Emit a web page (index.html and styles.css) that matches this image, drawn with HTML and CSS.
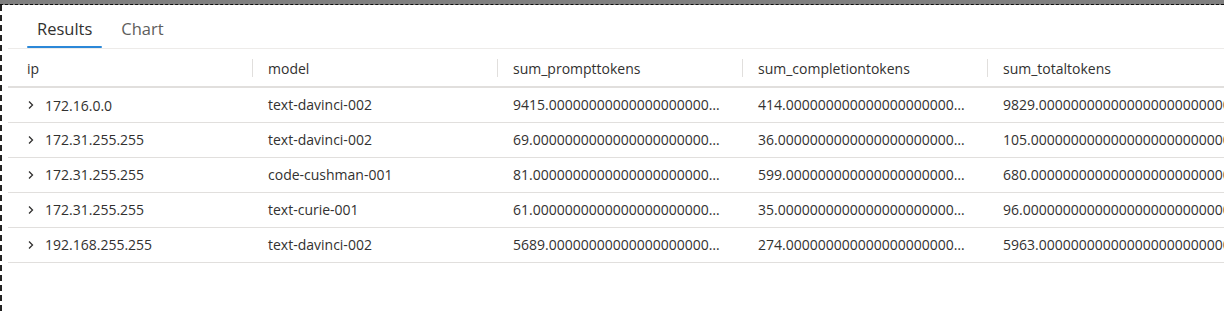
FILE: index.html
```html
<!DOCTYPE html>
<html lang="en">
  <head>
    <meta charset="UTF-8" />
    <title>Query results</title>
    <link rel="stylesheet" href="styles.css">
  </head>
  <body>
    <div class="topbar"></div>
    <div class="frame">
      <div class="tabs">
        <div class="tab active">Results</div>
        <div class="tab">Chart</div>
      </div>

      <table class="results">
        <colgroup>
          <col class="col-ip" />
          <col class="col" />
          <col class="col" />
          <col class="col" />
          <col class="col-last" />
        </colgroup>
        <thead>
          <tr>
            <th class="first">ip</th>
            <th class="sep">model</th>
            <th class="sep">sum_prompttokens</th>
            <th class="sep">sum_completiontokens</th>
            <th class="sep">sum_totaltokens</th>
          </tr>
        </thead>
        <tbody id="rows"></tbody>
      </table>
    </div>

    <script>
      const rows = [
        ["172.16.0.0", "text-davinci-002", "9415", "414", "9829"],
        ["172.31.255.255", "text-davinci-002", "69", "36", "105"],
        ["172.31.255.255", "code-cushman-001", "81", "599", "680"],
        ["172.31.255.255", "text-curie-001", "61", "35", "96"],
        ["192.168.255.255", "text-davinci-002", "5689", "274", "5963"],
      ];

      const zeros = ".0000000000000000000000000000000000";
      const chevron = `<svg class="chevron" width="8" height="10" viewBox="0 0 8 10"><path d="M2 1.5 L5.5 5 L2 8.5" fill="none" stroke="#323130" stroke-width="1.3"/></svg>`;

      document.getElementById("rows").innerHTML = rows
        .map(
          (r) => `
          <tr>
            <td class="first"><span class="ip">${chevron}${r[0]}</span></td>
            <td>${r[1]}</td>
            <td>${r[2]}${zeros}</td>
            <td>${r[3]}${zeros}</td>
            <td>${r[4]}${zeros}</td>
          </tr>`
        )
        .join("");
    </script>
  </body>
</html>
```

FILE: styles.css
```css
:root {
  --text: #323130;
  --muted: #605e5c;
  --line: #edebe9;
  --line-strong: #e1dfdd;
  --accent: #2b88d8;
}

* {
  margin: 0;
  padding: 0;
  box-sizing: border-box;
}

html,
body {
  width: 1224px;
  height: 311px;
  overflow: hidden;
}

body {
  background: white;
  color: var(--text);
  font-family: "Open Sans", "Noto Sans", sans-serif;
  font-size: 14px;
}

.topbar {
  height: 5px;
  background: #7f7f7f;
  border-bottom: 1px dashed #111;
}

.frame {
  height: 306px;
  border-left: 2px dashed #222;
  padding-left: 6px;
  overflow: hidden;
}

.tabs {
  display: flex;
  gap: 9px;
  padding: 9px 0 0 19px;
  border-bottom: 1px solid var(--line);
  height: 44px;
}

.tab {
  padding: 3px 10px 0;
  height: 34px;
  font-size: 16.5px;
  color: var(--muted);
  position: relative;
}

.tab.active {
  color: var(--text);
  font-weight: 500;
}

.tab.active::after {
  content: "";
  position: absolute;
  left: 0;
  right: 0;
  bottom: 0;
  height: 2px;
  border-radius: 2px;
  background: var(--accent);
}

.results {
  table-layout: fixed;
  border-collapse: collapse;
  width: 1524px;
}

.col-ip {
  width: 244px;
}

.col {
  width: 245px;
}

.col-last {
  width: 545px;
}

.results th,
.results td {
  text-align: left;
  font-weight: 400;
  padding: 0 16px;
  white-space: nowrap;
  overflow: hidden;
  text-overflow: ellipsis;
}

.results .first {
  padding-left: 19px;
}

.results th {
  height: 38px;
  padding-top: 2px;
  border-bottom: 2px solid var(--line-strong);
  position: relative;
}

.results th.sep::before {
  content: "";
  position: absolute;
  left: 0;
  top: 10px;
  height: 18px;
  border-left: 1px solid var(--line-strong);
}

.results td {
  height: 35px;
  border-bottom: 1px solid var(--line-strong);
}

.ip {
  display: inline-flex;
  align-items: center;
  gap: 10px;
}

.chevron {
  flex-shrink: 0;
}
```
